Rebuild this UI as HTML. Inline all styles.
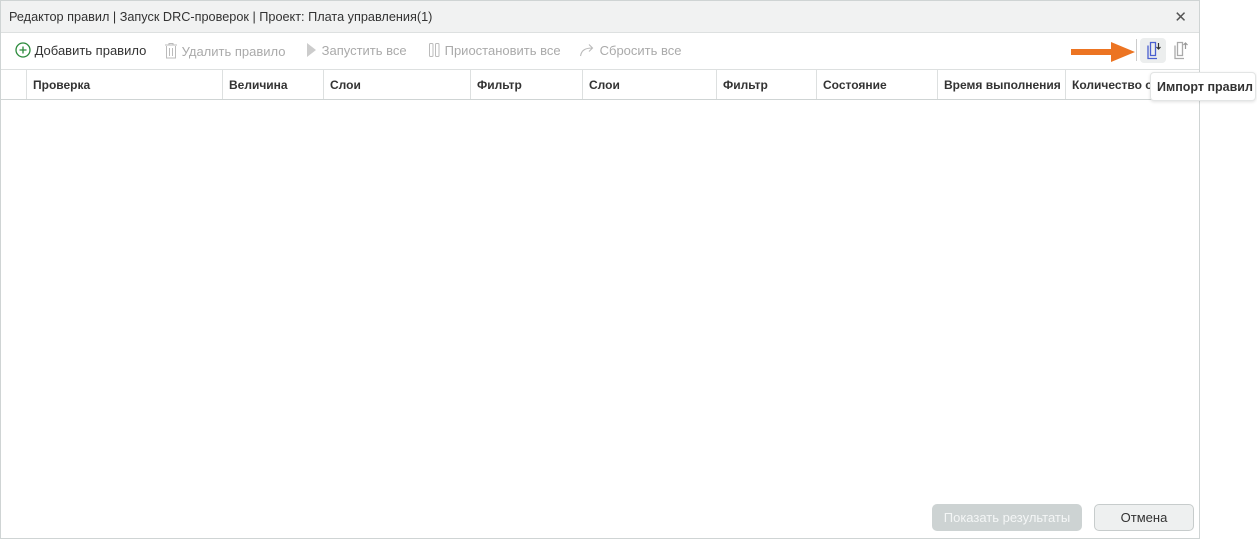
<!DOCTYPE html>
<html><head><meta charset="utf-8"><style>
*{box-sizing:border-box;margin:0;padding:0}
body{width:1257px;height:539px;background:#fff;font-family:"Liberation Sans",sans-serif;font-size:13px;color:#333;position:relative;overflow:hidden}
.win{position:absolute;left:0;top:0;width:1200px;height:539px;border:1px solid #cfd4d4;background:#fff}
.title{position:absolute;left:0;top:0;width:1198px;height:32px;background:#f1f2f2;border-bottom:1px solid #dde0e0;padding:9px 8px;font-size:12.7px;color:#333}
.close{position:absolute;right:12px;top:7px;font-size:15px;color:#555}
.tb{position:absolute;top:41px;font-size:13px;color:#aaa;white-space:nowrap}
.hdr{position:absolute;left:0;top:68px;width:1198px;height:31px;border-top:1px solid #dde0e0;border-bottom:1px solid #cfd4d4;overflow:hidden}
.c{position:absolute;top:0;height:30px;border-left:1px solid #dde0e0;padding:8px 6px;font-weight:bold;font-size:12px;color:#333;white-space:nowrap}
.btn{position:absolute;top:503px;height:27px;border-radius:5px;font-size:13px;text-align:center;line-height:27px}
</style></head><body>
<div class="win">
<div class="title">Редактор правил | Запуск DRC-проверок | Проект: Плата управления(1)<span class="close">✕</span></div>
<div class="tb" style="left:14px;color:#333"><svg width="16" height="16" style="vertical-align:-3px"><circle cx="8" cy="8" r="7" fill="none" stroke="#2a8a3a" stroke-width="1.3"/><path d="M8 4.5v7M4.5 8h7" stroke="#2a8a3a" stroke-width="1.3"/></svg> Добавить правило</div>
<div class="tb" style="left:163px"><svg width="14" height="17" style="vertical-align:-3px"><path d="M1 3h12M5 3V1.5h4V3M2.5 4v12h9V4M5.5 6v8M8.5 6v8" fill="none" stroke="#bbb"/></svg> Удалить правило</div>
<div class="tb" style="left:304px"><svg width="13" height="16" style="vertical-align:-3px"><path d="M2 1l9 7-9 7z" fill="#ccc"/></svg> Запустить все</div>
<div class="tb" style="left:427px"><svg width="13" height="16" style="vertical-align:-3px"><rect x="1.5" y="1.5" width="3.5" height="13" rx="1" fill="none" stroke="#bbb"/><rect x="7.5" y="1.5" width="3.5" height="13" rx="1" fill="none" stroke="#bbb"/></svg> Приостановить все</div>
<div class="tb" style="left:578px"><svg width="17" height="16" style="vertical-align:-3px"><path d="M1.5 14c1-6 5-8 12-8M10 2.5l3.5 3.5-3.5 3.5" fill="none" stroke="#bbb" stroke-width="1.1"/></svg> Сбросить все</div>
<svg style="position:absolute;left:1070px;top:40px" width="64" height="22"><path d="M0 8h40V1l24 10-24 10v-7H0z" fill="#ec7422"/></svg>
<div style="position:absolute;left:1135px;top:38px;width:1px;height:22px;background:#ccc"></div>
<div style="position:absolute;left:1139px;top:37px;width:26px;height:25px;background:#eceeee;border-radius:4px"></div>
<svg style="position:absolute;left:1144px;top:40px" width="18" height="19"><path d="M3 4.5v13h9" fill="none" stroke="#4a5fd0" stroke-width="1.3"/><path d="M5.5 1.5h5v13h-5z" fill="none" stroke="#4a5fd0" stroke-width="1.3"/><path d="M13.5 2v6M11.5 6l2 2 2-2" fill="none" stroke="#333" stroke-width="1.2"/></svg>
<svg style="position:absolute;left:1171px;top:40px" width="18" height="19"><path d="M3 4.5v13h9" fill="none" stroke="#aaa" stroke-width="1.3"/><path d="M5.5 1.5h5v13h-5z" fill="none" stroke="#aaa" stroke-width="1.3"/><path d="M13.5 8V2M11.5 4l2-2 2 2" fill="none" stroke="#999" stroke-width="1.2"/></svg>
<div class="hdr">
<div class="c" style="left:25px;width:196px">Проверка</div>
<div class="c" style="left:221px;width:101px">Величина</div>
<div class="c" style="left:322px;width:147px">Слои</div>
<div class="c" style="left:469px;width:112px">Фильтр</div>
<div class="c" style="left:581px;width:134px">Слои</div>
<div class="c" style="left:715px;width:100px">Фильтр</div>
<div class="c" style="left:815px;width:121px">Состояние</div>
<div class="c" style="left:936px;width:128px">Время выполнения</div>
<div class="c" style="left:1064px;width:140px">Количество ошибок</div>
</div>
<div class="btn" style="left:931px;width:150px;background:#cdd3d3;color:#f4f6f6">Показать результаты</div>
<div class="btn" style="left:1093px;width:100px;background:#eef0f0;border:1px solid #c7cccc;color:#333;line-height:25px">Отмена</div>
</div>
<div style="position:absolute;left:1150px;top:72px;width:106px;height:29px;background:#fff;border:1px solid #e3e5e5;border-radius:4px;box-shadow:0 1px 3px rgba(0,0,0,.12);font-weight:bold;font-size:12.5px;color:#333;padding:7px 6px;white-space:nowrap">Импорт правил</div>
</body></html>
